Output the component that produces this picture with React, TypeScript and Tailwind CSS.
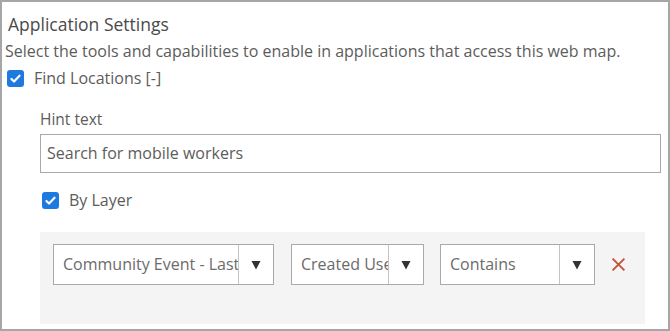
import React from 'react';

const font = { fontFamily: '"Open Sans", Lato, sans-serif' };

function CheckBox() {
  return (
    <span className="flex h-[17px] w-[17px] shrink-0 items-center justify-center rounded-[3px] bg-[#1f7ae0]">
      <svg className="h-[13px] w-[13px]" viewBox="0 0 16 16" fill="none">
        <path
          d="M3 8.5l3.2 3.2L13 4.5"
          stroke="#fff"
          strokeWidth={2.6}
          strokeLinecap="round"
          strokeLinejoin="round"
        />
      </svg>
    </span>
  );
}

function Select({ label, width }: { label: string; width: string }) {
  return (
    <div className={`flex h-[41px] border border-[#a9a9a9] bg-white ${width}`}>
      <div className="min-w-0 flex-1 overflow-hidden whitespace-nowrap pl-[9px] text-[16px] leading-[39px] text-[#6b6b6b]">
        {label}
      </div>
      <div className="flex w-[35px] shrink-0 items-center justify-center border-l border-[#c4c4c4]">
        <svg className="h-[10px] w-[10px]" viewBox="0 0 10 10">
          <path d="M0.5 1h9L5 9.5z" fill="#333" />
        </svg>
      </div>
    </div>
  );
}

export default function App() {
  return (
    <div
      className="h-[331px] w-[670px] overflow-hidden border-2 border-[#a6a6a6] bg-white text-[#5c5c5c]"
      style={font}
    >
      {/* Title */}
      <div className="pl-[6px] pt-[10px] text-[17.5px] leading-[24px] text-[#4a4a4a]">
        Application Settings
      </div>

      {/* Description */}
      <div className="pl-[3px] pt-[4px] text-[16px] leading-[22px]">
        Select the tools and capabilities to enable in applications that access this web map.
      </div>

      {/* Find Locations */}
      <div className="mt-[5px] flex items-center pl-[5px]">
        <CheckBox />
        <span className="ml-[10px] text-[16px] leading-[22px]">Find Locations [-]</span>
      </div>

      <div className="pl-[38px] pr-[7px]">
        {/* Hint text */}
        <div className="mt-[19px] text-[15.5px] leading-[22px]">Hint text</div>
        <div className="mt-[4px] h-[39px] border border-[#a9a9a9] pl-[6px] text-[16px] leading-[37px]">
          Search for mobile workers
        </div>

        {/* By Layer */}
        <div className="mt-[16px] flex items-center pl-[2px]">
          <CheckBox />
          <span className="ml-[10px] text-[16px] leading-[22px]">By Layer</span>
        </div>

        {/* Filter panel */}
        <div className="mt-[21px] h-[92px] w-[605px] bg-[#f4f4f4] pl-[13px] pt-[12px]">
          <div className="flex items-center">
            <Select label="Community Event - Last Month" width="w-[221px]" />
            <div className="w-[17px]" />
            <Select label="Created User" width="w-[133px]" />
            <div className="w-[16px]" />
            <Select label="Contains" width="w-[155px]" />
            <svg className="ml-[16px] h-[15px] w-[15px]" viewBox="0 0 14 14">
              <path d="M1.5 1.5l11 11M12.5 1.5l-11 11" stroke="#c4533a" strokeWidth={1.8} />
            </svg>
          </div>
        </div>
      </div>
    </div>
  );
}
